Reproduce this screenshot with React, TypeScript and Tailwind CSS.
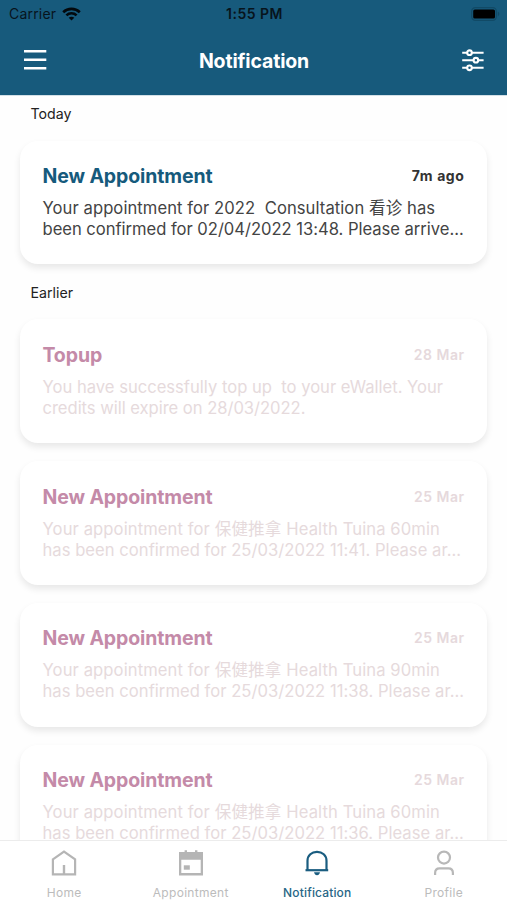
type Notice = { title: string; time: string; lines: [string, string]; tracking: [string, string]; unread?: boolean };

const today: Notice[] = [
  {
    title: "New Appointment",
    time: "7m ago",
    lines: ["Your appointment for 2022  Consultation 看诊 has", "been confirmed for 02/04/2022 13:48. Please arrive..."],
    tracking: ["tracking-[0.07px]", "tracking-[-0.03px]"],
    unread: true,
  },
];

const tuina: [string, string] = ["tracking-[0.1px]", "tracking-[0.03px]"];

const earlier: Notice[] = [
  {
    title: "Topup",
    time: "28 Mar",
    lines: ["You have successfully top up  to your eWallet. Your", "credits will expire on 28/03/2022."],
    tracking: ["tracking-normal", "tracking-[-0.04px]"],
  },
  { title: "New Appointment", time: "25 Mar", lines: ["Your appointment for 保健推拿 Health Tuina 60min", "has been confirmed for 25/03/2022 11:41. Please ar..."], tracking: tuina },
  { title: "New Appointment", time: "25 Mar", lines: ["Your appointment for 保健推拿 Health Tuina 90min", "has been confirmed for 25/03/2022 11:38. Please ar..."], tracking: tuina },
  { title: "New Appointment", time: "25 Mar", lines: ["Your appointment for 保健推拿 Health Tuina 60min", "has been confirmed for 25/03/2022 11:36. Please ar..."], tracking: tuina },
];

function Card({ title, time, lines, tracking, unread }: Notice) {
  return (
    <article className="h-[123.7px] shrink-0 rounded-[18px] bg-white px-[22.5px] pt-[21.5px] shadow-[0_4px_7px_rgba(0,0,0,0.09)]">
      <div className="flex h-[27px] items-center justify-between">
        <h2 className={`pt-[2px] text-[19.5px] font-bold tracking-[-0.12px] ${unread ? "text-[#165a7c]" : "text-[#c48aa8]"}`}>{title}</h2>
        <span className={`text-[14px] ${unread ? "font-bold tracking-[0.6px] text-[#333333]" : "font-semibold tracking-[0.5px] text-[#e6d9dc]"}`}>{time}</span>
      </div>
      <div className={`mt-[8.9px] text-[16.6px] leading-[21px] whitespace-pre ${unread ? "text-[#444444]" : "text-[#e6dadc]"}`}>
        <p className={`h-[21px] ${tracking[0]}`}>{lines[0]}</p>
        <p className={`h-[21px] ${tracking[1]}`}>{lines[1]}</p>
      </div>
    </article>
  );
}

function StatusBar() {
  return (
    <div className="grid h-[27px] grid-cols-3 items-center pr-[7px] pl-[9px] text-[14px] text-[#07141c]">
      <div className="flex items-center gap-[6px]">
        <span className="tracking-[0.2px]">Carrier</span>
        <svg width="19" height="14" viewBox="0 0 19 14" fill="none" stroke="#03090d" strokeWidth="2.6">
          <path d="M1.2 5.2C5.8 .7 13.2 .7 17.8 5.2" />
          <path d="M4.4 8.4C7.3 5.6 11.7 5.6 14.6 8.4" />
          <path d="M9.5 13.5 6.7 10.7C8.2 9.3 10.8 9.3 12.3 10.7Z" fill="#03090d" stroke="none" />
        </svg>
      </div>
      <span className="text-center font-semibold tracking-[0.5px]">1:55 PM</span>
      <svg className="justify-self-end" width="29" height="14" viewBox="0 0 29 14">
        <rect x=".7" y=".7" width="24.6" height="12.6" rx="3.6" fill="none" stroke="#114a66" strokeWidth="1.2" />
        <rect x="2.2" y="2.4" width="21.8" height="9.2" rx="1.6" fill="#000" />
        <path d="M26.8 4.8c2 .5 2 3.9 0 4.4z" fill="#114a66" />
      </svg>
    </div>
  );
}

function HomeIcon() {
  return (
    <svg width="26" height="26" viewBox="0 0 26 26" fill="none" stroke="#b5b5b5" strokeWidth="2.2">
      <path d="M1.9 9.3 13 1.7 24.1 9.3V24.3H1.9Z" />
      <path d="M13 24V15" strokeWidth="2.4" />
    </svg>
  );
}

function CalendarIcon() {
  return (
    <svg width="26" height="26" viewBox="0 0 26 26" fill="#b5b5b5">
      <path fillRule="evenodd" d="M1 2H6.6V.3H9V2H17V.3H19.4V2H25V25.4H1ZM3.3 9.7V23.1H22.7V9.7Z" />
      <rect x="5.8" y="15.3" width="6" height="4.4" />
    </svg>
  );
}

function BellIcon() {
  return (
    <svg width="26" height="26" viewBox="0 0 26 26" fill="none" stroke="#1a5d80" strokeWidth="2.2">
      <path d="M3.5 20V10.8C3.5 5.3 7.7 1.8 13 1.8S22.5 5.3 22.5 10.8V20" />
      <path d="M1.5 20.2H24.2" />
      <path d="M10 22.2H16C15.5 24.2 14.5 25.2 13 25.2S10.5 24.2 10 22.2Z" fill="#1a5d80" stroke="none" />
    </svg>
  );
}

function ProfileIcon() {
  return (
    <svg width="26" height="26" viewBox="0 0 26 26" fill="none" stroke="#b8b8b8" strokeWidth="2.2">
      <circle cx="13" cy="7.6" r="6" />
      <path d="M4.1 25V23C4.1 20.2 5.8 18.3 8.5 18.3H17.5C20.2 18.3 21.9 20.2 21.9 23V25" />
    </svg>
  );
}

const tabs = [
  { label: "Home", icon: <HomeIcon /> },
  { label: "Appointment", icon: <CalendarIcon /> },
  { label: "Notification", icon: <BellIcon />, active: true },
  { label: "Profile", icon: <ProfileIcon /> },
];

export default function App() {
  return (
    <div className="flex h-[900px] w-[507px] flex-col overflow-hidden bg-[#fefefe] font-['Inter','Noto_Sans_CJK_SC',sans-serif]">
      <header className="h-[95px] shrink-0 bg-[#175a7c]">
        <StatusBar />
        <div className="flex h-[66px] items-center justify-between pr-[22px] pl-[23px]">
          <svg width="24" height="22" viewBox="0 0 24 22" stroke="#fff" strokeWidth="2.5">
            <path d="M1 2.2H23.3M1 10.7H23.3M1 19.2H23.3" />
          </svg>
          <h1 className="pt-[3px] text-[19.5px] font-bold tracking-[-0.15px] text-white">Notification</h1>
          <svg width="24" height="24" viewBox="0 0 24 24" fill="none" stroke="#fff" strokeWidth="2.1">
            <path d="M1.2 4.7H6M11 4.7H22.6M1.2 12.2H12.4M17.4 12.2H22.6M1.2 19.8H6M11 19.8H22.6" />
            <circle cx="8.5" cy="4.7" r="2.3" />
            <circle cx="14.9" cy="12.2" r="2.3" />
            <circle cx="8.5" cy="19.8" r="2.3" />
          </svg>
        </div>
      </header>
      <main className="flex min-h-0 flex-1 flex-col overflow-hidden border-t border-[#d3e0e7] px-[20px]">
        <h3 className="mt-[8px] h-[20px] shrink-0 pl-[10.5px] text-[14.2px] leading-[20px] text-[#222]">Today</h3>
        <div className="mt-[16.5px] flex shrink-0 flex-col">
          {today.map((n) => <Card key={n.time} {...n} />)}
        </div>
        <h3 className="mt-[19px] h-[20px] shrink-0 pl-[10.5px] text-[14.2px] leading-[20px] text-[#222]">Earlier</h3>
        <div className="mt-[16.3px] flex shrink-0 flex-col gap-[18px]">
          {earlier.map((n, i) => <Card key={i} {...n} />)}
        </div>
      </main>
      <nav className="grid h-[60px] shrink-0 grid-cols-4 border-t border-[#ececec] bg-white pl-[1px]">
        {tabs.map((t) => (
          <div key={t.label} className="flex flex-col items-center pt-[9px]">
            {t.icon}
            <span className={`mt-[9px] text-[12px] leading-[16px] ${t.active ? "font-medium tracking-[0.15px] text-[#286686]" : "tracking-[0.3px] text-[#bcbcbc]"}`}>{t.label}</span>
          </div>
        ))}
      </nav>
    </div>
  );
}
